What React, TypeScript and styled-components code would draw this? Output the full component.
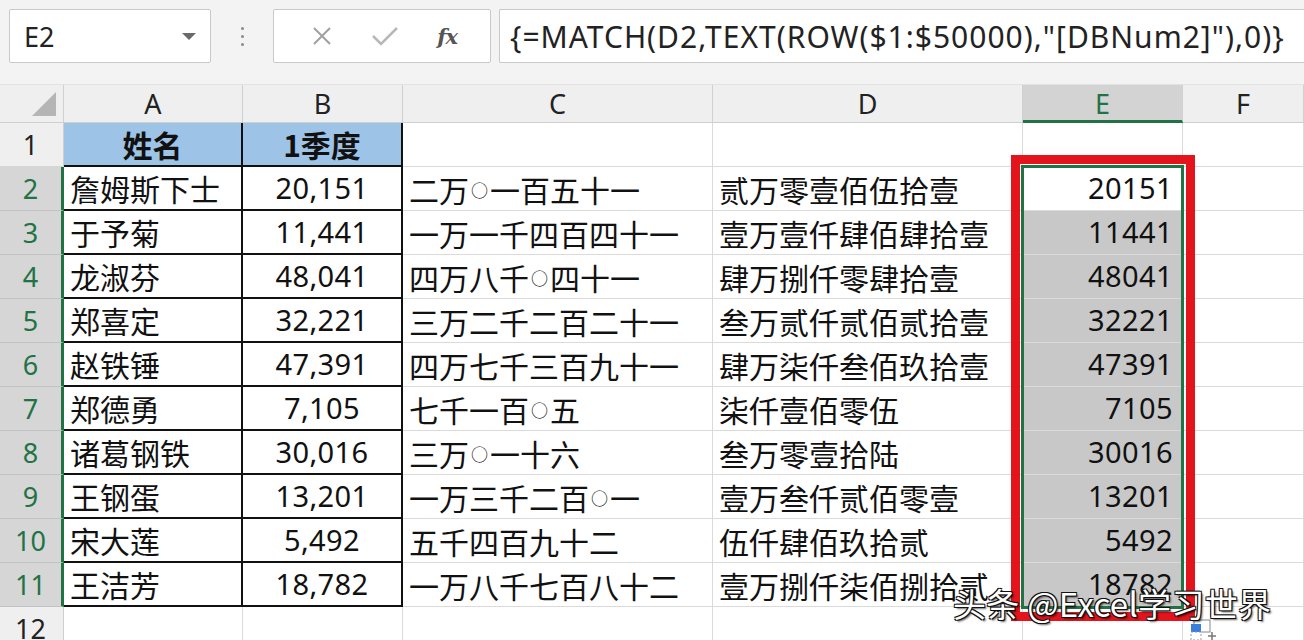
import React from "react";
import styled, { createGlobalStyle } from "styled-components";

const Global = createGlobalStyle`
  html, body { margin: 0; padding: 0; background: #ffffff; }
  body { width: 1304px; height: 640px; overflow: hidden; font-family: "Noto Sans CJK SC", "Noto Sans", sans-serif; }
  * { box-sizing: border-box; }
`;

const Page = styled.div`
  position: relative;
  width: 1304px;
  height: 640px;
  overflow: hidden;
  background: #fff;
`;

const Toolbar = styled.div`
  height: 85px;
  background: #f3f3f3;
  display: flex;
  align-items: flex-start;
  padding: 9px 0 0 9px;
  border-bottom: 1px solid #e2e2e2;
`;

const Box = styled.div<{ $w: string }>`
  height: 54px;
  width: ${(p) => p.$w};
  background: #fff;
  border: 1px solid #c9c9c9;
  border-radius: 2px;
  display: flex;
  align-items: center;
`;

const NameText = styled.span`
  flex: 1;
  padding-left: 14px;
  font-family: "Noto Sans", "Open Sans", sans-serif;
  font-size: 27px;
  color: #222;
`;

const Caret = styled.span`
  width: 0;
  height: 0;
  border-left: 7px solid transparent;
  border-right: 7px solid transparent;
  border-top: 7px solid #6a6a6a;
  margin-right: 14px;
`;

const Dots = styled.div`
  width: 62px;
  height: 54px;
  display: flex;
  flex-direction: column;
  align-items: center;
  justify-content: center;
  gap: 5px;
`;

const Dot = styled.span`
  width: 3px;
  height: 3px;
  border-radius: 50%;
  background: #8a8a8a;
`;

const FxButtons = styled(Box)`
  justify-content: space-around;
  padding: 0 14px 0 18px;
  margin-right: 8px;
`;

const Fx = styled.span`
  font-family: "DejaVu Serif", "Liberation Serif", serif;
  font-style: italic;
  font-weight: 700;
  font-size: 21px;
  color: #555;
  letter-spacing: -1px;
`;

const FormulaBox = styled(Box)`
  flex: 1;
  border-right: none;
  border-radius: 2px 0 0 2px;
  padding-left: 10px;
`;

const FormulaText = styled.span`
  font-family: "Noto Sans", "Open Sans", sans-serif;
  font-size: 30px;
  color: #222;
  white-space: nowrap;
  letter-spacing: 1px;
`;

const COLS = "64px 179px 160px 310px 310px 160px 121px";

const HeaderRow = styled.div`
  display: grid;
  grid-template-columns: ${COLS};
  grid-template-rows: 38px;
  height: 38px;
  background: #efefef;
`;

const Corner = styled.div`
  border-right: 1px solid #d0d0d0;
  border-bottom: 1px solid #cfcfcf;
  display: flex;
  align-items: flex-end;
  justify-content: flex-end;
  padding: 0 7px 6px 0;
`;

const ColHead = styled.div<{ $sel?: boolean }>`
  display: flex;
  align-items: center;
  justify-content: center;
  line-height: 1;
  font-family: "Noto Sans", "Open Sans", sans-serif;
  font-size: 27px;
  color: ${(p) => (p.$sel ? "#217346" : "#222")};
  background: ${(p) => (p.$sel ? "#d3d3d3" : "transparent")};
  border-right: 1px solid #d0d0d0;
  border-bottom: ${(p) => (p.$sel ? "3px solid #217346" : "1px solid #cfcfcf")};
  padding-top: ${(p) => (p.$sel ? "2px" : "0")};
`;

const Row = styled.div`
  display: grid;
  grid-template-columns: ${COLS};
  grid-template-rows: 44px;
  height: 44px;
`;

const RowHead = styled.div<{ $sel?: boolean }>`
  display: flex;
  align-items: center;
  justify-content: center;
  line-height: 1;
  font-family: "Noto Sans", "Open Sans", sans-serif;
  font-size: 27px;
  color: ${(p) => (p.$sel ? "#217346" : "#222")};
  background: ${(p) => (p.$sel ? "#d6d6d6" : "#efefef")};
  border-bottom: 1px solid ${(p) => (p.$sel ? "#c2c2c2" : "#d6d6d6")};
  border-right: ${(p) => (p.$sel ? "3px solid #217346" : "1px solid #cfcfcf")};
  padding-right: ${(p) => (p.$sel ? "0" : "2px")};
`;

type Align = "left" | "center" | "right";

const Cell = styled.div<{ $align?: Align; $boxed?: boolean; $header?: boolean; $shade?: boolean }>`
  display: flex;
  align-items: center;
  min-height: 0;
  line-height: 1.2;
  justify-content: ${(p) =>
    p.$align === "center" ? "center" : p.$align === "right" ? "flex-end" : "flex-start"};
  padding: ${(p) => (p.$align === "right" ? "0 9px 0 0" : p.$align === "center" ? "0" : "0 0 0 6px")};
  font-size: 30px;
  font-weight: ${(p) => (p.$header ? 700 : 400)};
  color: #111;
  white-space: nowrap;
  overflow: visible;
  background: ${(p) => (p.$header ? "#9dc3e6" : p.$shade ? "#c8c8c8" : "#fff")};
  border-right: ${(p) => (p.$boxed ? "2px solid #111" : "1px solid #dadada")};
  border-bottom: ${(p) => (p.$boxed ? "2px solid #111" : "1px solid #dadada")};
`;

const Zero = styled.span`
  font-size: 17px;
  margin: 0 2px;
  position: relative;
  top: 2px;
`;

const Num = styled.span`
  font-family: "Noto Sans", "Open Sans", sans-serif;
  font-size: 29px;
  letter-spacing: 0.4px;
`;

const SelectionFrame = styled.div`
  position: absolute;
  left: 1021px;
  top: 165px;
  width: 163px;
  height: 444px;
  border: 3px solid #217346;
  pointer-events: none;
`;

const RedFrame = styled.div`
  position: absolute;
  left: 1011px;
  top: 155px;
  width: 184px;
  height: 466px;
  border: 9px solid #e3141c;
  pointer-events: none;
`;

const Watermark = styled.div`
  position: absolute;
  left: 953px;
  top: 579px;
  font-family: "Noto Sans CJK SC", "Noto Sans", sans-serif;
  font-size: 33px;
  color: #fff;
  white-space: nowrap;
  letter-spacing: 0.3px;
  text-shadow: 1px 1px 0 #111, -1px -1px 0 #111, 1px -1px 0 #111, -1px 1px 0 #111,
    2px 2px 2px rgba(0, 0, 0, 0.6);
`;

const QuickIcon = styled.div`
  position: absolute;
  left: 1190px;
  top: 618px;
  width: 32px;
  height: 24px;
`;

const namesA = ["詹姆斯下士", "于予菊", "龙淑芬", "郑喜定", "赵铁锤", "郑德勇", "诸葛钢铁", "王钢蛋", "宋大莲", "王洁芳"];
const valsB = ["20,151", "11,441", "48,041", "32,221", "47,391", "7,105", "30,016", "13,201", "5,492", "18,782"];
const textC = [
  "二万○一百五十一",
  "一万一千四百四十一",
  "四万八千○四十一",
  "三万二千二百二十一",
  "四万七千三百九十一",
  "七千一百○五",
  "三万○一十六",
  "一万三千二百○一",
  "五千四百九十二",
  "一万八千七百八十二",
];
const textD = [
  "贰万零壹佰伍拾壹",
  "壹万壹仟肆佰肆拾壹",
  "肆万捌仟零肆拾壹",
  "叁万贰仟贰佰贰拾壹",
  "肆万柒仟叁佰玖拾壹",
  "柒仟壹佰零伍",
  "叁万零壹拾陆",
  "壹万叁仟贰佰零壹",
  "伍仟肆佰玖拾贰",
  "壹万捌仟柒佰捌拾贰",
];
const valsE = ["20151", "11441", "48041", "32221", "47391", "7105", "30016", "13201", "5492", "18782"];

function ChineseNum({ text }: { text: string }) {
  const parts = text.split("○");
  return (
    <>
      {parts.map((p, i) => (
        <React.Fragment key={i}>
          {i > 0 && <Zero>○</Zero>}
          {p}
        </React.Fragment>
      ))}
    </>
  );
}

export default function App() {
  return (
    <Page>
      <Global />
      <Toolbar>
        <Box $w="202px">
          <NameText>E2</NameText>
          <Caret />
        </Box>
        <Dots>
          <Dot />
          <Dot />
          <Dot />
        </Dots>
        <FxButtons $w="218px">
          <svg width="22" height="22" viewBox="0 0 22 22">
            <path d="M3 3 L19 19 M19 3 L3 19" stroke="#a0a0a0" strokeWidth="2" fill="none" />
          </svg>
          <svg width="28" height="22" viewBox="0 0 28 22">
            <path d="M2 11 L10 19 L26 3" stroke="#b8b8b8" strokeWidth="2.6" fill="none" />
          </svg>
          <Fx>fx</Fx>
        </FxButtons>
        <FormulaBox $w="auto">
          <FormulaText>{'{=MATCH(D2,TEXT(ROW($1:$50000),"[DBNum2]"),0)}'}</FormulaText>
        </FormulaBox>
      </Toolbar>

      <HeaderRow>
        <Corner>
          <svg width="24" height="24" viewBox="0 0 24 24">
            <polygon points="24,0 24,24 0,24" fill="#b5b5b5" />
          </svg>
        </Corner>
        <ColHead>A</ColHead>
        <ColHead>B</ColHead>
        <ColHead>C</ColHead>
        <ColHead>D</ColHead>
        <ColHead $sel>E</ColHead>
        <ColHead>F</ColHead>
      </HeaderRow>

      <Row>
        <RowHead>1</RowHead>
        <Cell $align="center" $boxed $header>姓名</Cell>
        <Cell $align="center" $boxed $header>1季度</Cell>
        <Cell />
        <Cell />
        <Cell />
        <Cell />
      </Row>
      {namesA.map((n, i) => (
        <Row key={n}>
          <RowHead $sel>{i + 2}</RowHead>
          <Cell $boxed>{n}</Cell>
          <Cell $boxed $align="center">
            <Num>{valsB[i]}</Num>
          </Cell>
          <Cell>
            <ChineseNum text={textC[i]} />
          </Cell>
          <Cell>{textD[i]}</Cell>
          <Cell $align="right" $shade={i > 0}>
            <Num>{valsE[i]}</Num>
          </Cell>
          <Cell />
        </Row>
      ))}
      <Row>
        <RowHead>12</RowHead>
        <Cell />
        <Cell />
        <Cell />
        <Cell />
        <Cell />
        <Cell />
      </Row>

      <SelectionFrame />
      <RedFrame />
      <QuickIcon>
        <svg width="32" height="24" viewBox="0 0 32 24">
          <rect x="4" y="2" width="16" height="12" fill="#fff" stroke="#888" strokeWidth="1" />
          <rect x="1" y="6" width="10" height="8" fill="#3b7ddd" />
          <rect x="1" y="14" width="10" height="8" fill="#fff" stroke="#999" strokeWidth="1" strokeDasharray="2 2" />
          <path d="M22 14 V22 M18 18 H26" stroke="#777" strokeWidth="1.5" />
        </svg>
      </QuickIcon>
      <Watermark>头条 @Excel学习世界</Watermark>
    </Page>
  );
}
